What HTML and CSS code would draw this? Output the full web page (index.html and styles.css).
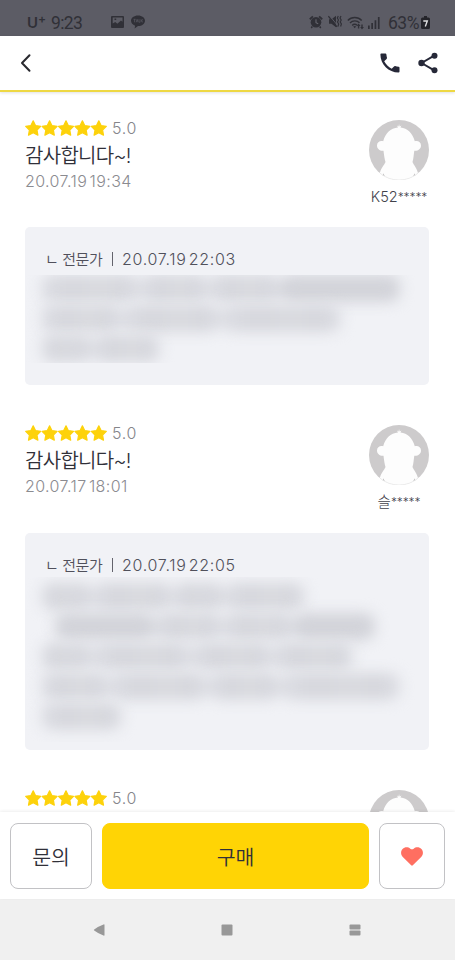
FILE: index.html
```
<!DOCTYPE html>
<html lang="ko">
<head>
<meta charset="utf-8">
<title>리뷰</title>
<link rel="stylesheet" href="styles.css">
</head>
<body>
<svg width="0" height="0" class="defs">
  <defs>
    <path id="star" d="M8.2 .8l2.3 4.7 5.2.8-3.7 3.7.9 5.2-4.7-2.5-4.7 2.5.9-5.2L.7 6.3l5.2-.8z" stroke-width="1.200" stroke-linejoin="round"/>
    <symbol id="stars" viewBox="0 0 82 16">
      <use href="#star"/><use href="#star" x="16.4"/><use href="#star" x="32.8"/><use href="#star" x="49.2"/><use href="#star" x="65.6"/>
    </symbol>
    <clipPath id="round"><circle cx="30" cy="30" r="30"/></clipPath>
    <symbol id="avatar" viewBox="0 0 60 60">
      <circle cx="30" cy="30" r="30" fill="#cdcbcc"/>
      <g clip-path="url(#round)" fill="#fdfdfd">
        <path d="M29 7.500l-1-2 1.600 1 .4-2.500.7 2.500 1.700-1L31.500 7.500C38.500 8 43.500 13 45.800 21.200c3.200-.8 6.200.8 6.200 4.300s-3.200 5.700-6.700 5.200C44.700 35 44.500 38.500 43.500 42c1.500 3.500 4 5.500 5.300 10.500L51 60H9l2-7.500c1.300-5 4-7 5.500-10.500-1-3.500-1.500-7-2-11.300C11.200 31.200 8 29 8 25.500s3-5.100 6.200-4.300C16.500 13 21.500 8 29 7.500z"/>
        <path d="M12 54h36l4 8H8z"/>
      </g>
      <path d="M14.200 53.300l1.600 2.700h-2zM45.800 53.300L44.200 56h2z" fill="#c3c1c2"/>
      <path d="M11 53.200a30 30 0 0 0 38 0" fill="none" stroke="#e8e8e8" stroke-width=".8"/>
    </symbol>
  </defs>
</svg>
<div class="phone">
  <div class="status">
    <span class="carrier">U<sup>+</sup></span>
    <span class="clock">9:23</span>
    <svg class="s-photo" width="13" height="12" viewBox="0 0 13 12"><path fill="#303037" fill-rule="evenodd" d="M1 0h11q1 0 1 1v10q0 1-1 1H1q-1 0-1-1V1q0-1 1-1zm.7 1.500v6L4.300 6l2 1.800L10 4.500l1.500 1.300V1.500zM3.500 2.500h1.700v1.500H3.500z"/></svg>
    <svg class="s-talk" width="14" height="14" viewBox="0 0 14 14"><path fill="#303037" d="M7 .5c4 0 7 2.300 7 5.300s-3 5.300-7 5.300l-3.400 2.400.5-2.800C1.600 9.800 0 8 0 5.800 0 2.800 3 .5 7 .5z"/><path d="M2.500 4.300h2.200M3.600 4.300v3M5.200 7.300l.9-3 .9 3M8 4.200v3h1.200M10 4.200v3M12 4.400L10.300 5.800 12 7.300" stroke="#5c5c65" stroke-width=".7" fill="none"/></svg>
    <svg class="s-alarm" width="14" height="14" viewBox="0 0 14 14"><g fill="#303037"><circle cx="7" cy="7.300" r="5.300"/><path d="M.2 3.600L3.300.7l1.200 1.200-3.200 3zM13.800 3.600L10.700.7 9.500 1.900l3.200 3zM2.500 11l1.500 1-1.300 1.400-1-.8zM11.500 11L10 12l1.300 1.400 1-.8z"/></g><path d="M7 4.200v3.500l2.200 1" fill="none" stroke="#65656e" stroke-width="1.100"/></svg>
    <svg class="s-mute" width="14" height="13" viewBox="0 0 14 13"><path fill="#303037" d="M1 4.200h2.500L8 .8v11.400L3.500 8.800H1z"/><path d="M1.400 .5l9 11" stroke="#5c5c65" stroke-width="1"/><path d="M.4 1.200l8.600 10.600M10.300 1l-1 2 1.200 2-1 2 1.200 2-.8 2.500M13 1l-1 2 1.200 2-1 2 1.200 2-.8 2.500" fill="none" stroke="#303037" stroke-width="1.200"/></svg>
    <svg class="s-wifi" width="17" height="14" viewBox="0 0 17 14"><path d="M.8 4.500C4.500.5 11 .5 14.700 4.500M3 7c2.700-2.800 7-2.800 9.500-.2M5.200 9.400c1.400-1.500 3.500-1.500 4.800-.2" fill="none" stroke="#303037" stroke-width="1.400"/><path fill="#303037" d="M6.200 10.500L7.700 12.300 9.200 10.500q-1.500-1.200-3 0zM11.600 7.500l1.900 2.500h-1.200v2.500h-1.400V10H9.700zM15 13.500L13.200 11h1.100V8.500h1.400V11h1.200z"/></svg>
    <svg class="s-signal" width="12" height="12" viewBox="0 0 12 12"><path fill="#303037" d="M0 8.500h1.700V12H0zM3.300 6H5v6H3.300zM6.600 3.200h1.700V12H6.600zM9.900 0h1.700v12H9.900z"/></svg>
    <span class="percent">63%</span>
    <svg class="s-battery" width="9" height="13" viewBox="0 0 9 13"><path fill="#24242a" d="M3 0h3v1.500h1.500Q9 1.500 9 3v8.500Q9 13 7.500 13h-6Q0 13 0 11.500V3q0-1.500 1.500-1.500H3z"/><path fill="none" stroke="#dedee0" stroke-width="1.400" d="M2.300 5h4L4.300 10.500"/></svg>
  </div>
  <header class="topbar">
    <svg class="back" width="12" height="20" viewBox="0 0 12 20"><path d="M9.500 2.200L2 10l7.500 7.800" fill="none" stroke="#29292f" stroke-width="2" stroke-linecap="round" stroke-linejoin="round"/></svg>
    <svg class="call" width="20" height="20" viewBox="0 0 20 20"><path fill="#262838" d="M1.300.5H5.400q.9 0 1 .9c.1 1.400.3 2.300.6 3.400q.1.600-.4 1.100L4.200 8.300c1.800 3.400 4.100 5.700 7.500 7.500L14 13.500q.5-.5 1.100-.4c1.200.3 2.200.5 3.500.6q.9.100.9 1V18.500q0 1-1 1C8.600 19.500.4 11.300.4 1.500q0-1 .9-1z"/></svg>
    <svg class="share" width="20" height="22" viewBox="0 0 20 22"><path d="M16.200 3.600L3.600 11l12.600 7.400" fill="none" stroke="#262838" stroke-width="1.900"/><g fill="#262838"><circle cx="16.500" cy="3.700" r="3"/><circle cx="3.500" cy="11" r="3.200"/><circle cx="16.500" cy="18.300" r="3"/></g></svg>
  </header>
  <main class="reviews">
    <article class="review">
      <div class="head">
        <div class="text">
          <div class="rating"><svg class="stars"><use href="#stars"/></svg><span class="score">5.0</span></div>
          <p class="comment">감사합니다~!</p>
          <p class="date">20.07.19 19:34</p>
        </div>
        <div class="user"><svg class="avatar"><use href="#avatar"/></svg><span class="name">K52<span class="mask">*****</span></span></div>
      </div>
      <section class="reply first">
        <p class="by"><span class="who">ㄴ 전문가</span><i class="sep"></i><span class="when">20.07.19 22:03</span></p>
        <div class="veil">
          <div class="row"><i class="w88"></i><i class="w60"></i><i class="w64"></i><i class="w112 deep"></i></div>
          <div class="row"><i class="w72"></i><i class="w88"></i><i class="w112"></i></div>
          <div class="row"><i class="w40"></i><i class="w60"></i></div>
        </div>
      </section>
    </article>
    <article class="review second-review">
      <div class="head">
        <div class="text">
          <div class="rating"><svg class="stars"><use href="#stars"/></svg><span class="score">5.0</span></div>
          <p class="comment">감사합니다~!</p>
          <p class="date">20.07.17 18:01</p>
        </div>
        <div class="user"><svg class="avatar"><use href="#avatar"/></svg><span class="name">슬<span class="mask">*****</span></span></div>
      </div>
      <section class="reply second">
        <p class="by"><span class="who">ㄴ 전문가</span><i class="sep"></i><span class="when">20.07.19 22:05</span></p>
        <div class="veil">
          <div class="row"><i class="w40"></i><i class="w72"></i><i class="w40"></i><i class="w72"></i></div>
          <div class="row indent"><i class="w88 deep"></i><i class="w60"></i><i class="w64"></i><i class="w72 deep"></i></div>
          <div class="row"><i class="w40"></i><i class="w88"></i><i class="w72"></i><i class="w72"></i></div>
          <div class="row"><i class="w60"></i><i class="w88"></i><i class="w64"></i><i class="w112"></i></div>
          <div class="row"><i class="w72"></i></div>
        </div>
      </section>
    </article>
    <article class="review">
      <div class="head">
        <div class="text">
          <div class="rating"><svg class="stars"><use href="#stars"/></svg><span class="score">5.0</span></div>
        </div>
        <div class="user"><svg class="avatar"><use href="#avatar"/></svg></div>
      </div>
    </article>
  </main>
  <footer class="actions">
    <button class="ask">문의</button>
    <button class="buy">구매</button>
    <button class="like"><svg width="22" height="19" viewBox="0 0 22 19"><path fill="#ff6f61" d="M10.200 18.300L1.800 10C-.4 7.700-.5 4 1.600 1.900 3.800-.3 7.300-.1 9.300 1.700q1.700 1.300 3.400 0C14.700-.1 18.200-.3 20.400 1.900 22.500 4 22.400 7.700 20.200 10L11.800 18.300q-.8.700-1.600 0z"/></svg></button>
  </footer>
  <nav class="nav">
    <svg width="12" height="12" viewBox="0 0 12 12"><path fill="#989898" d="M11.500 1V11Q11.500 12 10.500 11.500Q5 9.500 1.200 6.500q-.7-.5 0-1Q5 2.500 10.500.5Q11.500 0 11.500 1z"/></svg>
    <svg width="12" height="12" viewBox="0 0 12 12"><rect x=".5" y=".5" width="11" height="11" rx="1" fill="#989898"/></svg>
    <svg width="12" height="12" viewBox="0 0 12 12"><g fill="#989898"><rect x=".5" y=".5" width="11" height="5" rx="1"/><rect x=".5" y="6.500" width="11" height="5" rx="1"/></g></svg>
  </nav>
</div>
</body>
</html>
```
FILE: styles.css
```
* { box-sizing: border-box; }
body, p { margin: 0; }
body {
  font-family: Inter, "Noto Sans CJK KR", sans-serif;
  background: #fff;
  color: #303039;
}
svg { display: block; flex: none; }
.defs { position: absolute; }
.phone { height: 960px; display: flex; flex-direction: column; overflow: hidden; }

.status {
  flex: none;
  height: 36px;
  padding: 9px 25px 0 27px;
  display: flex;
  align-items: center;
  background: #5c5c65;
  color: #303037;
  font-family: Roboto, sans-serif;
}
.carrier { width: 24px; font: 600 15px/20px Inter, sans-serif; white-space: nowrap; }
.carrier sup { font-size: 12px; line-height: 0; vertical-align: 5px; }
.clock { width: 60px; font-size: 17.500px; letter-spacing: -.6px; }
.s-photo { margin-top: -1px; }
.s-talk { margin-left: 7px; margin-top: -1px; }
.s-alarm { margin-left: auto; margin-top: -1px; }
.s-mute { margin-left: 5px; margin-top: -2px; }
.s-wifi { margin-left: 5px; }
.s-signal { margin-left: 4px; }
.percent { margin-left: 8px; width: 33px; font-size: 17.500px; letter-spacing: -.5px; white-space: nowrap; }

.topbar {
  flex: none;
  height: 56px;
  padding: 0 17px 2px 20px;
  display: flex;
  align-items: center;
  border-bottom: 2px solid #eed843;
  box-shadow: 0 1px 3px rgba(0, 0, 0, .12);
}
.back { margin-top: 1px; }
.call { margin-left: auto; margin-top: 1px; }
.share { margin-left: 18px; margin-top: 1px; }

.reviews { flex: 1; min-height: 0; overflow: hidden; padding: 28px 26px 0 25px; }
.review { height: 305px; }
.second-review { height: 365px; }
.head { display: flex; justify-content: space-between; height: 107px; }
.rating { display: flex; align-items: center; height: 16px; }
.stars { width: 82px; height: 16px; fill: #fdd20b; stroke: #fdd20b; }
.score { margin-left: 5px; font-size: 16px; font-weight: 300; color: #85858a; letter-spacing: .7px; }
.comment { margin-top: 6px; height: 29px; line-height: 29px; font-size: 20px; font-weight: 350; letter-spacing: -.7px; white-space: nowrap; }
.date { line-height: 22px; margin-top: -1px; font-size: 16px; font-weight: 300; color: #8b8b90; letter-spacing: .4px; word-spacing: -2.500px; white-space: nowrap; }
.user { width: 60px; display: flex; flex-direction: column; align-items: center; }
.avatar { width: 60px; height: 60px; }
.name { margin-top: 7px; height: 20px; line-height: 20px; font-size: 14.500px; font-weight: 300; color: #42424b; white-space: nowrap; }
.mask { font-size: 12px; letter-spacing: -.1px; vertical-align: 1px; line-height: 1; }

.reply { padding: 19px 22px 0; background: #f1f2f6; border-radius: 5px; overflow: hidden; }
.reply.first { height: 158px; }
.reply.second { height: 217px; margin-top: 1px; }
.by { display: flex; align-items: center; height: 25px; margin-left: -2px; font-size: 15px; font-weight: 350; color: #50505b; white-space: nowrap; }
.who { width: 58px; letter-spacing: -.4px; }
.sep { width: 1px; height: 14px; margin: 0 9px; background: #63636c; }
.when { font-size: 16px; font-weight: 300; letter-spacing: .7px; word-spacing: -3px; }
.veil { margin: 4px -22px 0; padding: 0 16px; height: 88px; overflow: hidden; }
.second .veil { margin-top: 0; padding-top: 6px; height: 165px; }
.row { display: flex; height: 30px; filter: blur(7px); }
.row.indent { padding-left: 14px; }
.row i { height: 27px; border-radius: 10px; background: linear-gradient(90deg, #dcdde3, #d5d6dc 30%, #d9dadf 60%, #d5d6dc 80%, #dcdde3); }
.row i.deep { background: #d2d3d9; }
.w40 { width: 51px; }
.w60 { width: 68px; }
.w64 { width: 72px; }
.w72 { width: 81px; }
.w88 { width: 99px; }
.w112 { width: 120px; }

.actions {
  flex: none;
  height: 87px;
  padding: 11px 10px 0;
  display: flex;
  gap: 10px;
  background: #fff;
  box-shadow: 0 -1px 3px rgba(0, 0, 0, .07);
  position: relative;
}
button {
  height: 66px;
  padding: 0;
  display: flex;
  align-items: center;
  justify-content: center;
  border: 1px solid #c2c2c5;
  border-radius: 8px;
  background: #fff;
  color: #303039;
  font: 350 20.500px "Noto Sans CJK KR", sans-serif;
}
.ask { width: 82px; }
.buy { width: 267px; border-color: #ffd405; background: #ffd405; }
.like { width: 66px; }

.nav {
  flex: none;
  height: 61px;
  padding: 1px 94px 0 93px;
  display: flex;
  align-items: center;
  justify-content: space-between;
  background: #f0f0f0;
}
```
